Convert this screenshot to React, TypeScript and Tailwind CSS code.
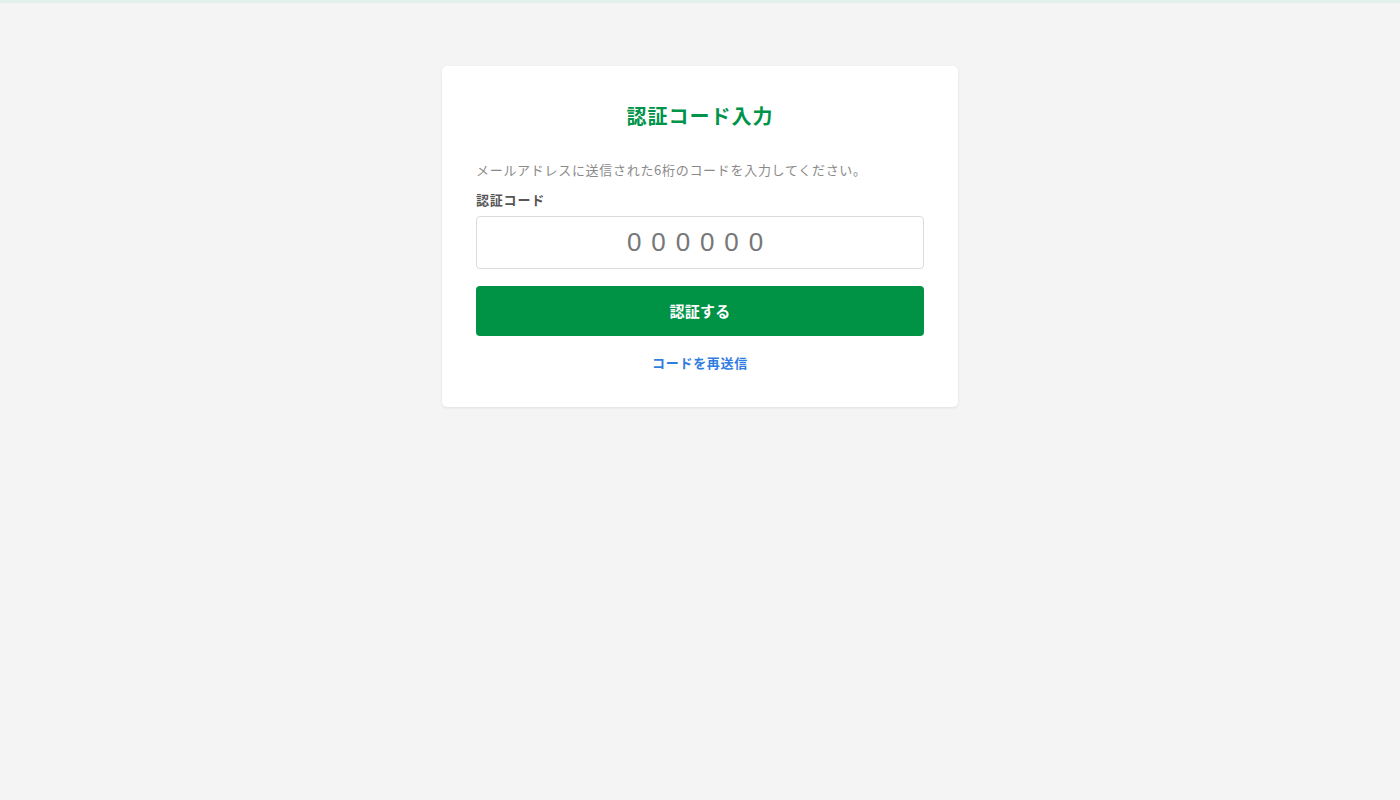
import React from "react";

export default function App() {
  return (
    <div
      className="min-h-[800px] w-full bg-[#f4f4f4] border-t-[3px] border-[#e3efea]"
      style={{ fontFamily: '"Noto Sans CJK JP", "Noto Sans", sans-serif' }}
    >
      <div className="flex justify-center pt-[63px]">
        <div className="w-[516px] bg-white rounded-[5px] shadow-[0_1px_3px_rgba(0,0,0,0.08)] px-[34px] pt-[36px] pb-[34px]">
          <h1 className="text-center text-[20px] leading-[28px] font-bold text-[#00934a] tracking-[1px]">
            認証コード入力
          </h1>
          <p className="mt-[30px] text-[13px] leading-[20px] text-[#8a8a8a] tracking-[0.7px]">
            メールアドレスに送信された6桁のコードを入力してください。
          </p>
          <label className="block mt-[10px] text-[13px] leading-[20px] font-bold text-[#555] tracking-[0.8px]">
            認証コード
          </label>
          <input
            type="text"
            placeholder="000000"
            className="mt-[6px] w-full h-[53px] rounded-[4px] border border-[#dcdcdc] bg-white text-center text-[26px] tracking-[0.38em] placeholder:text-[#777] outline-none"
            style={{ fontFamily: '"Liberation Sans", Arial, sans-serif' }}
          />
          <button className="mt-[17px] w-full h-[50px] rounded-[4px] bg-[#009245] text-white text-[15px] font-bold tracking-[0.3px]">
            認証する
          </button>
          <div className="mt-[13px] text-center">
            <a className="text-[13px] leading-[20px] font-semibold text-[#2f7de1] cursor-pointer tracking-[0.7px]">
              コードを再送信
            </a>
          </div>
        </div>
      </div>
    </div>
  );
}
